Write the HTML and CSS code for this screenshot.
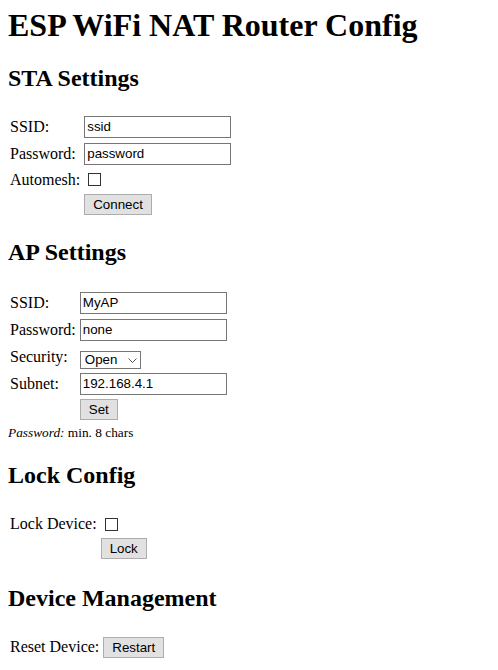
FILE: index.html
```html
<!DOCTYPE html>
<html>
<head>
<meta charset="utf-8">
<title>ESP WiFi NAT Router Config</title>
<link rel="stylesheet" href="styles.css">
</head>
<body>
<h1 class="title">ESP WiFi NAT Router Config</h1>
<div class="config">
<h2 class="head head-first">STA Settings</h2>
<form class="form" action="" method="GET">
<table class="tbl">
<tr class="r-in"><td>SSID:</td><td><input class="txt" type="text" name="ssid" value="ssid"></td></tr>
<tr class="r-in"><td>Password:</td><td><input class="txt" type="text" name="password" value="password"></td></tr>
<tr class="r-chk-sta"><td>Automesh:</td><td><input class="chk" type="checkbox" name="am"></td></tr>
<tr class="r-btn"><td></td><td><input class="btn" type="submit" value="Connect"></td></tr>
</table>
</form>
<h2 class="head">AP Settings</h2>
<form class="form" action="" method="GET">
<table class="tbl">
<tr class="r-in"><td>SSID:</td><td><input class="txt" type="text" name="ap" value="MyAP"></td></tr>
<tr class="r-in"><td>Password:</td><td><input class="txt" type="text" name="ap_password" value="none"></td></tr>
<tr class="r-in"><td>Security:</td><td class="cell-sel"><span class="sel-wrap"><select class="sel" name="sec"><option>Open</option><option>WPA2</option></select><svg class="sel-arrow" width="9" height="5" viewBox="0 0 9 5"><polyline points="0.5,0.5 4.5,4.5 8.5,0.5" fill="none" stroke="#555" stroke-width="1"/></svg></span></td></tr>
<tr class="r-in"><td>Subnet:</td><td><input class="txt" type="text" name="network" value="192.168.4.1"></td></tr>
<tr class="r-btn"><td></td><td><input class="btn" type="submit" value="Set"></td></tr>
</table>
<small class="note"><i>Password: </i>min. 8 chars</small>
</form>
<h2 class="head">Lock Config</h2>
<form class="form" action="" method="GET">
<table class="tbl">
<tr class="r-chk"><td>Lock Device:</td><td><input class="chk" type="checkbox" name="lock"></td></tr>
<tr class="r-btn"><td></td><td><input class="btn" type="submit" value="Lock"></td></tr>
</table>
</form>
<h2 class="head head-last">Device Management</h2>
<form class="form" action="" method="GET">
<table class="tbl">
<tr class="r-btn"><td>Reset Device:</td><td><input class="btn" type="submit" name="reset" value="Restart"></td></tr>
</table>
</form>
</div>
</body>
</html>
```

FILE: styles.css
```css
html {
  background: #fff;
}
body {
  font-family: "Liberation Serif", "Times New Roman", serif;
  font-size: 16px;
  line-height: normal;
  margin: 8px;
  color: #000;
}
.title {
  font-size: 32px;
  font-weight: bold;
  line-height: 35px;
  margin: 0 0 21px 0;
}
.head {
  font-size: 24px;
  font-weight: bold;
  line-height: 28px;
  margin: 20px 0 22px 0;
}
.head-first {
  margin-bottom: 20px;
}
.head-last {
  margin-top: 21.5px;
}
.form {
  margin: 0 0 16px 0;
}
.tbl {
  border-collapse: separate;
  border-spacing: 2px;
  margin: 0 0 0 -1px;
}
.tbl td {
  padding: 1px;
  vertical-align: middle;
}
.r-in { height: 25px; }
.r-chk-sta { height: 23px; }
.r-chk { height: 22px; }
.r-btn { height: 23px; }
.txt {
  display: block;
  box-sizing: border-box;
  width: 147px;
  height: 22px;
  margin: 0;
  padding: 1px 2px;
  border: 1px solid #767676;
  border-radius: 0;
  background: #fff;
  color: #000;
  font-family: "Liberation Sans", Arial, sans-serif;
  font-size: 13.33px;
  outline: none;
}
.chk {
  display: block;
  -webkit-appearance: none;
  appearance: none;
  box-sizing: border-box;
  width: 13px;
  height: 13px;
  margin: 0 0 0 4px;
  border: 1px solid #333;
  border-radius: 0;
  background: #fff;
}
.btn {
  display: block;
  -webkit-appearance: none;
  appearance: none;
  box-sizing: border-box;
  height: 21px;
  margin: 0;
  padding: 0 8px;
  border: 1px solid #adadad;
  border-radius: 0;
  background: #e1e1e1;
  color: #000;
  font-family: "Liberation Sans", Arial, sans-serif;
  font-size: 13.33px;
  line-height: 19px;
}
.cell-sel {
  vertical-align: bottom !important;
  padding-bottom: 0 !important;
}
.sel-wrap {
  position: relative;
  display: block;
  width: 61px;
  height: 18px;
}
.sel {
  display: block;
  -webkit-appearance: none;
  appearance: none;
  box-sizing: border-box;
  width: 61px;
  height: 18px;
  margin: 0;
  padding: 0 0 0 4px;
  border: 1px solid #767676;
  border-radius: 0;
  background: #fff;
  color: #000;
  font-family: "Liberation Sans", Arial, sans-serif;
  font-size: 13.33px;
  line-height: 16px;
}
.sel-arrow {
  position: absolute;
  right: 4px;
  top: 7px;
  pointer-events: none;
}
.note {
  font-size: 13.33px;
}
```
